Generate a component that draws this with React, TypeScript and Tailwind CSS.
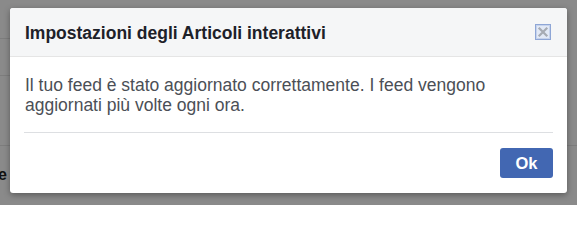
import React from "react";

function CloseIcon() {
  return (
    <svg width="16" height="16" viewBox="0 0 16 16" aria-hidden="true">
      <rect x="0.5" y="0.5" width="15" height="15" fill="#e2e9f6" stroke="#8ea6d6" />
      <rect x="1.5" y="1.5" width="13" height="13" fill="none" stroke="#c6d3ec" />
      <path d="M4.5 4.5 L11.5 11.5 M11.5 4.5 L4.5 11.5" stroke="#a6abb3" strokeWidth="2.2" strokeLinecap="square" />
    </svg>
  );
}

export default function App() {
  return (
    <div
      className="relative w-[577px] h-[205px] overflow-hidden bg-[#8a8a8a]"
      style={{ fontFamily: '"Liberation Sans", Arial, Helvetica, sans-serif' }}
    >
      {/* dimmed page underneath */}
      <div className="flex flex-col">
        <div className="h-[39px] border-b border-[#7d7d7d] w-[12px]" />
        <div className="h-[37px] border-b border-[#7d7d7d] w-[12px]" />
        <div className="h-[70px] border-b border-[#7d7d7d]" />
        <div className="h-[21px]" />
        <div className="flex h-[16px]">
          <div className="w-[7px] overflow-hidden flex justify-end">
            <span className="text-[16px] leading-[16px] font-bold text-[#111]">e</span>
          </div>
        </div>
      </div>

      {/* dialog */}
      <div className="absolute left-[10px] top-[8px] w-[557px] h-[185px] bg-white rounded-[3px] shadow-[0_2px_6px_rgba(0,0,0,0.35)] flex flex-col overflow-hidden">
        <div className="h-[49px] bg-[#f5f6f7] border-b border-[#e5e5e5] flex items-center justify-between pl-[15px] pr-[16px]">
          <h1 className="pt-[1px] text-[17.5px] leading-[20px] font-bold text-[#1d2129]">
            Impostazioni degli Articoli interattivi
          </h1>
          <CloseIcon />
        </div>
        <div className="px-[14px] pt-[18px]">
          <p className="pl-[1px] text-[17.5px] leading-[20px] text-[#4b4f56]">
            Il tuo feed è stato aggiornato correttamente. I feed vengono
            <br />
            aggiornati più volte ogni ora.
          </p>
          <div className="mt-[17px] border-t border-[#dddfe2]" />
          <div className="flex justify-end pt-[15px]">
            <button className="w-[53px] h-[30px] rounded-[3px] bg-[#4267b2] text-white text-[16.5px] font-bold">
              Ok
            </button>
          </div>
        </div>
      </div>
    </div>
  );
}
